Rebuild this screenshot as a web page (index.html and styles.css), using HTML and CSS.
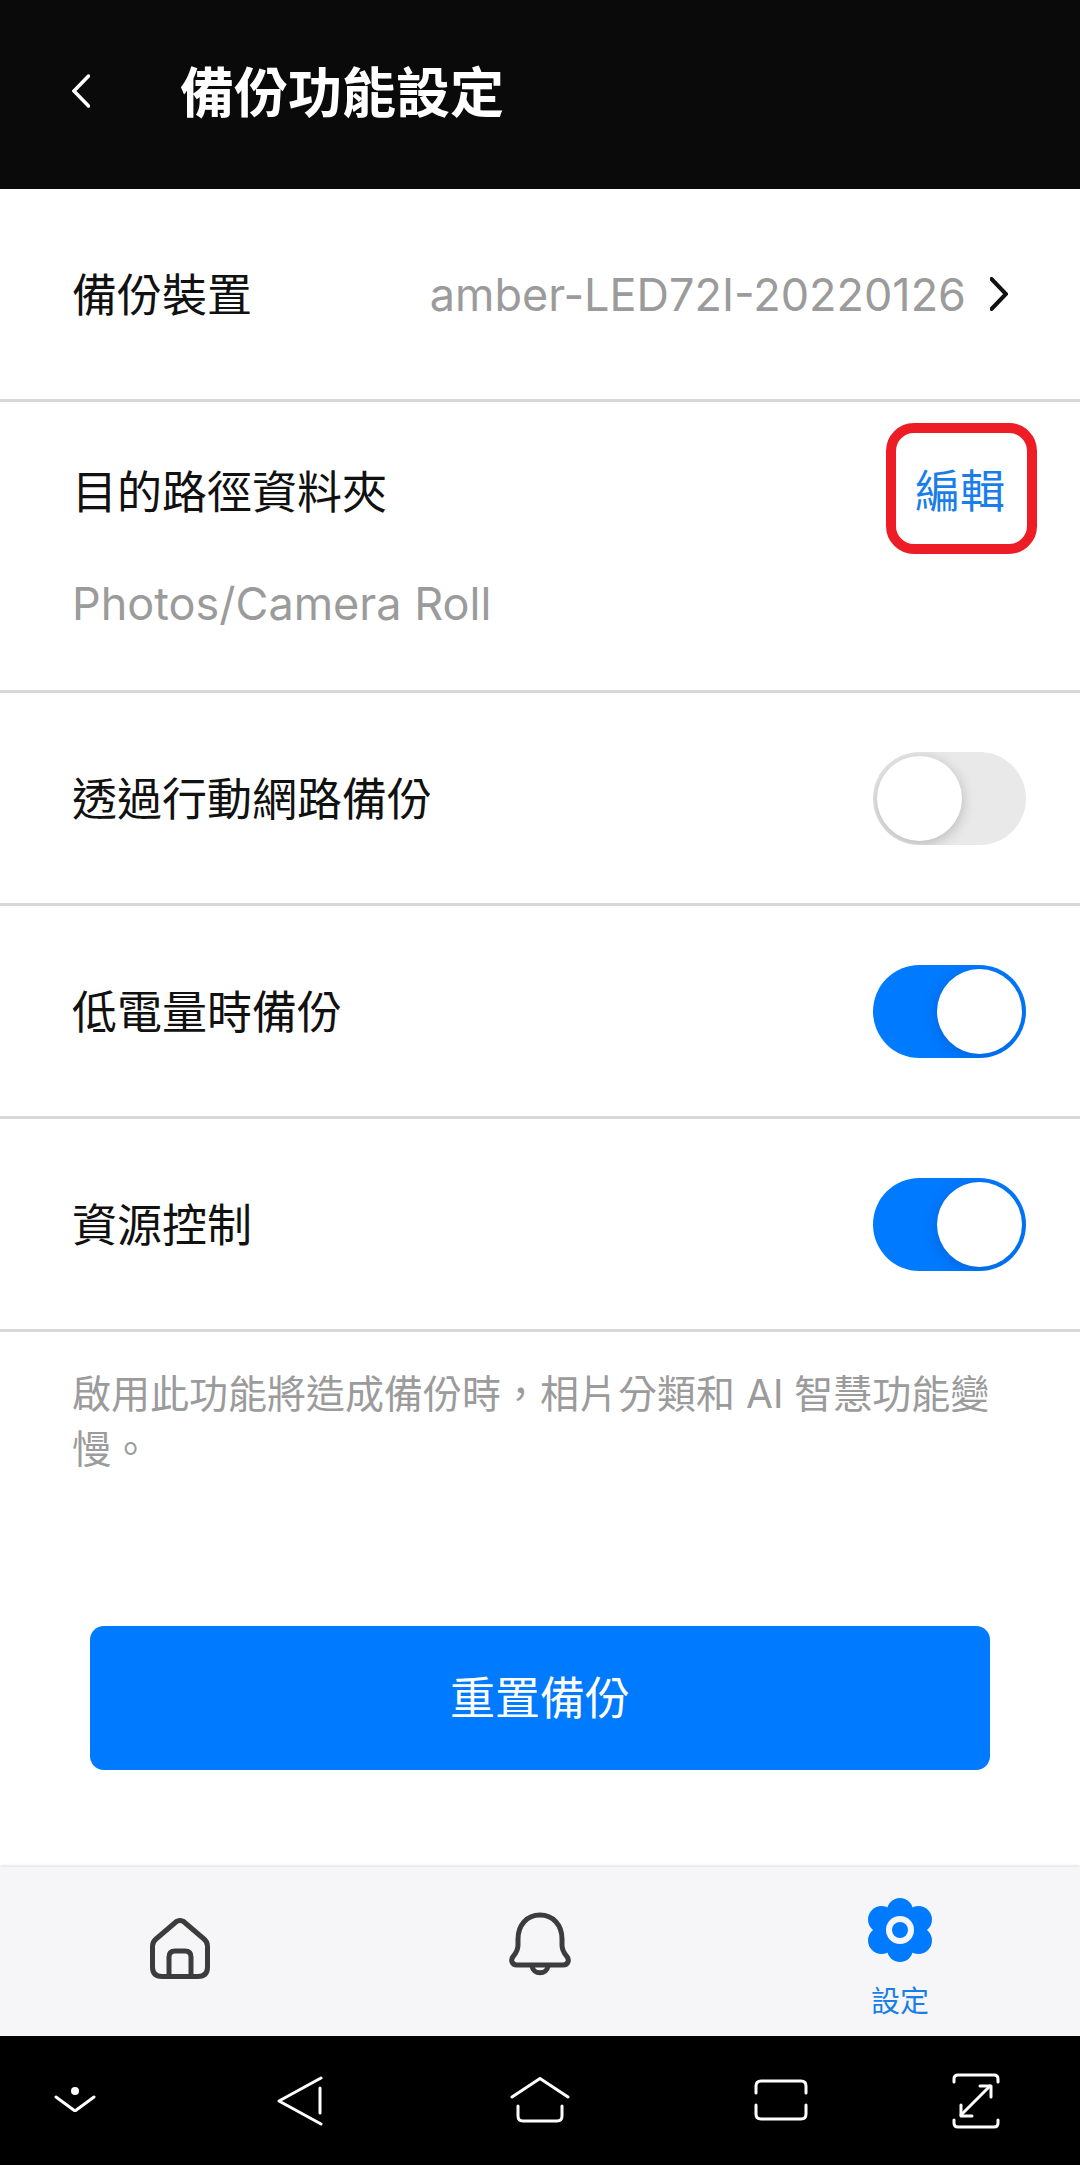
FILE: index.html
```html
<!DOCTYPE html>
<html lang="zh-Hant">
  <head>
    <meta charset="UTF-8" />
    <meta name="viewport" content="width=device-width, initial-scale=1.0" />
    <title>備份功能設定</title>
    <link rel="stylesheet" href="styles.css">
  </head>
  <body>
    <div class="app">
      <header class="topbar">
        <svg class="back-icon" width="18" height="34" viewBox="0 0 18 34"><path d="M16.5 2 L2 17 L16.5 32" /></svg>
        <h1>備份功能設定</h1>
      </header>

      <main class="content">
        <div class="row">
          <span class="label">備份裝置</span>
          <div class="row-right">
            <span class="value">amber-LED72I-20220126</span>
            <svg class="chevron" width="18" height="34" viewBox="0 0 18 34"><path d="M1.5 2 L16 17 L1.5 32" /></svg>
          </div>
        </div>

        <div class="row row-path">
          <div class="path-top">
            <span class="label">目的路徑資料夾</span>
            <span class="edit-box">編輯</span>
          </div>
          <span class="value">Photos/Camera Roll</span>
        </div>

        <div class="row">
          <span class="label">透過行動網路備份</span>
          <div class="toggle"><span class="knob"></span></div>
        </div>

        <div class="row">
          <span class="label">低電量時備份</span>
          <div class="toggle on"><span class="knob"></span></div>
        </div>

        <div class="row">
          <span class="label">資源控制</span>
          <div class="toggle on"><span class="knob"></span></div>
        </div>

        <p class="note">啟用此功能將造成備份時，相片分類和 AI 智慧功能變慢。</p>

        <button class="reset-button">重置備份</button>
      </main>

      <nav class="tabbar">
        <div class="tab">
          <svg class="tab-icon" width="60" height="61" viewBox="0 0 60 61">
            <path d="M26.5 3.5 Q30 1.5 33.5 3.5 L54 21 Q57.5 24 57.5 28 V49 Q57.5 58.5 48 58.5 H12 Q2.5 58.5 2.5 49 V28 Q2.5 24 6 21 Z" />
            <path d="M19 58 V39 Q19 33 25 33 H35 Q41 33 41 39 V58" />
          </svg>
        </div>
        <div class="tab">
          <svg class="tab-icon bell" width="62" height="64" viewBox="0 0 62 64">
            <path d="M31 3 C18 3 9 13 9 27 V33 C9 38 7 41 4.5 44 C1 48 3 53 8 53 H54 C59 53 61 48 57.5 44 C55 41 53 38 53 33 V27 C53 13 44 3 31 3 Z" />
            <path d="M23 54 C24 63 38 63 39 54" />
          </svg>
        </div>
        <div class="tab active">
          <svg class="gear" width="64" height="64" viewBox="0 0 64 64">
            <circle cx="32" cy="13" r="13" />
            <circle cx="32" cy="51" r="13" />
            <circle cx="13.5" cy="21.5" r="13.5" />
            <circle cx="50.5" cy="21.5" r="13.5" />
            <circle cx="13.5" cy="42.5" r="13.5" />
            <circle cx="50.5" cy="42.5" r="13.5" />
            <circle cx="32" cy="32" r="21" />
            <circle class="gear-ring" cx="32" cy="32" r="14" />
            <circle cx="32" cy="32" r="8" />
          </svg>
          <span class="tab-label">設定</span>
        </div>
      </nav>

      <div class="system-nav">
        <svg class="nav-hide" width="42" height="26" viewBox="0 0 42 26">
          <circle class="nav-dot" cx="21" cy="5" r="4" />
          <path d="M2 11 L21 25 L40 11" />
        </svg>
        <svg class="nav-back" width="46" height="50" viewBox="0 0 46 50">
          <path d="M44 2 L2 25 L44 48" />
          <path d="M43 12 V37" />
        </svg>
        <svg class="nav-home" width="60" height="46" viewBox="0 0 60 46">
          <path d="M2 20 L30 1.5 L58 20" />
          <path d="M8 29 V39 Q8 44 13 44 H47 Q52 44 52 39 V29" />
        </svg>
        <svg class="nav-recent" width="54" height="42" viewBox="0 0 54 42">
          <path d="M2 14 V7 Q2 2 7 2 H47 Q52 2 52 7 V14" />
          <path d="M2 26 V35 Q2 40 7 40 H47 Q52 40 52 35 V26" />
        </svg>
        <svg class="nav-expand" width="48" height="56" viewBox="0 0 48 56">
          <path d="M2 9 V6 Q2 2 6 2 H42 Q46 2 46 6 V9" />
          <path d="M2 47 V50 Q2 54 6 54 H42 Q46 54 46 50 V47" />
          <path d="M9 42 L38 13" />
          <path d="M28 13 H39 V24" />
          <path d="M9 32 V43 H20" />
        </svg>
      </div>
    </div>
  </body>
</html>
```

FILE: styles.css
```css
* {
  margin: 0;
  padding: 0;
  box-sizing: border-box;
  font-family: Inter, "Noto Sans CJK TC", sans-serif;
}

body {
  background-color: white;
}

.app {
  width: 1080px;
  height: 2165px;
  display: flex;
  flex-direction: column;
  overflow: hidden;
}

.topbar {
  height: 189px;
  flex-shrink: 0;
  background-color: #0a0a0a;
  color: white;
  display: flex;
  align-items: center;
  padding: 0 0 7px 72px;
}

.topbar h1 {
  font-size: 54px;
  font-weight: 700;
  margin: 5px 0 0 90px;
  line-height: 1;
}

.back-icon path {
  fill: none;
  stroke: white;
  stroke-width: 3.5;
  stroke-linecap: round;
}

.content {
  flex: 1;
  display: flex;
  flex-direction: column;
}

.row {
  height: 213px;
  flex-shrink: 0;
  display: flex;
  align-items: center;
  justify-content: space-between;
  padding: 0 54px 0 72px;
  border-bottom: 3px solid #d8d8d8;
}

.label {
  font-size: 45px;
  color: #111;
}

.row > .label {
  margin-bottom: 3px;
}

.value {
  font-size: 45px;
  color: #9b9b9b;
}

.row-right {
  display: flex;
  align-items: center;
  gap: 24px;
  margin-right: 18px;
}

.chevron path {
  fill: none;
  stroke: #111;
  stroke-width: 4;
  stroke-linecap: round;
}

.row-path {
  height: 291px;
  flex-direction: column;
  align-items: stretch;
  justify-content: flex-start;
  padding: 21px 43px 0 72px;
}

.path-top {
  display: flex;
  align-items: center;
  justify-content: space-between;
}

.path-top .label {
  padding-top: 2px;
}

.row-path .value {
  margin-top: 22px;
  font-size: 45px;
}

.edit-box {
  width: 151px;
  height: 131px;
  border: 10px solid #ee1c25;
  border-radius: 28px;
  padding-right: 3px;
  font-size: 45px;
  color: #1a7ee8;
  display: flex;
  align-items: center;
  justify-content: center;
}

.toggle {
  width: 153px;
  height: 93px;
  border-radius: 47px;
  background-color: #e9e9e9;
  padding: 4px;
  display: flex;
  overflow: hidden;
}

.toggle .knob {
  width: 85px;
  height: 85px;
  border-radius: 50%;
  background-color: white;
  box-shadow: 0 3px 14px rgba(0, 0, 0, 0.22);
}

.toggle.on {
  background-color: #007aff;
  justify-content: flex-end;
}

.toggle.on .knob {
  box-shadow: 0 3px 14px rgba(0, 40, 110, 0.25);
}

.note {
  font-size: 39px;
  line-height: 55px;
  color: #9b9b9b;
  padding: 0 54px 0 72px;
  margin-top: 34px;
}

.reset-button {
  width: 900px;
  height: 144px;
  margin: 150px auto 0;
  padding-bottom: 6px;
  border: none;
  border-radius: 14px;
  background-color: #007aff;
  color: white;
  font-size: 45px;
}

.tabbar {
  height: 169px;
  flex-shrink: 0;
  background-color: #f6f6f8;
  box-shadow: 0 -1px 3px rgba(0, 0, 0, 0.15);
  display: grid;
  grid-template-columns: repeat(3, 1fr);
}

.tab {
  display: flex;
  flex-direction: column;
  align-items: center;
  padding-top: 51px;
}

.tab .bell {
  margin-top: -6px;
}

.tab.active {
  padding-top: 31px;
}

.tab-icon path {
  fill: none;
  stroke: #3c3c3c;
  stroke-width: 5;
  stroke-linejoin: round;
}

.gear circle {
  fill: #007aff;
}

.gear .gear-ring {
  fill: #f6f6f8;
}

.tab-label {
  font-size: 29px;
  line-height: 1;
  color: #1a7ee8;
  margin-top: 25px;
}

.system-nav {
  height: 129px;
  flex-shrink: 0;
  background-color: black;
  display: flex;
  align-items: center;
  padding-left: 54px;
}

.system-nav path {
  fill: none;
  stroke: white;
  stroke-width: 3;
  stroke-linecap: round;
  stroke-linejoin: round;
}

.nav-dot {
  fill: white;
}

.nav-hide {
  margin: 0 0 3px 0;
}

.nav-back {
  margin-left: 181px;
}

.nav-home {
  margin: 0 0 1px 187px;
}

.nav-recent {
  margin: 0 0 1px 184px;
}

.nav-expand {
  margin-left: 144px;
}
```
